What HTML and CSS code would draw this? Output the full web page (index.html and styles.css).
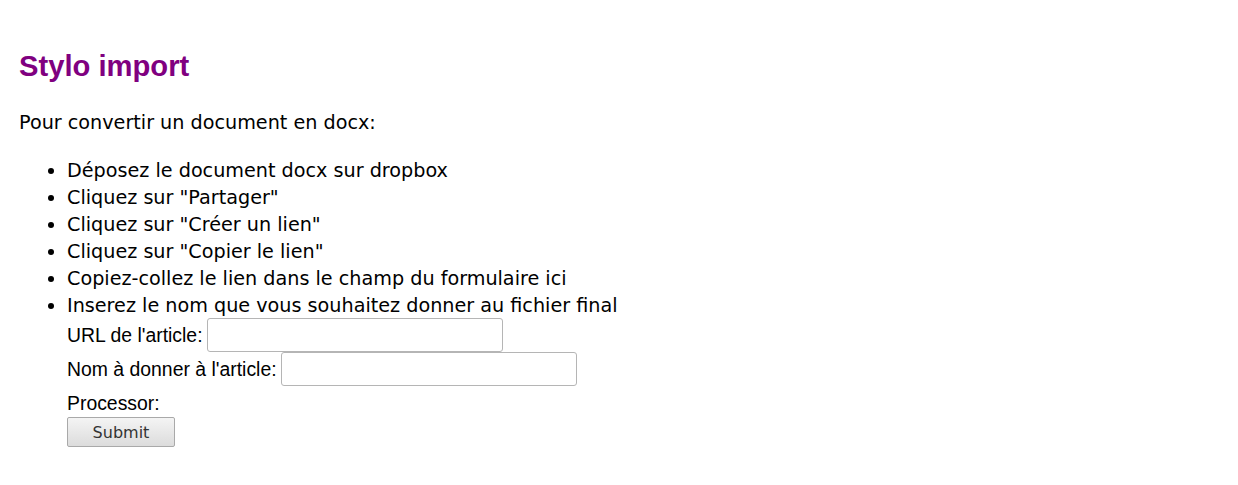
FILE: index.html
```html
<!DOCTYPE html>
<html lang="fr">
<head>
<meta charset="utf-8">
<title>Stylo import</title>
<link rel="stylesheet" href="styles.css">
</head>
<body>
<main class="page">
  <h1 class="title">Stylo import</h1>
  <p class="intro">Pour convertir un document en docx:</p>
  <ul class="steps">
    <li>Déposez le document docx sur dropbox</li>
    <li>Cliquez sur "Partager"</li>
    <li>Cliquez sur "Créer un lien"</li>
    <li>Cliquez sur "Copier le lien"</li>
    <li>Copiez-collez le lien dans le champ du formulaire ici</li>
    <li>Inserez le nom que vous souhaitez donner au fichier final</li>
  </ul>
  <form class="form">
    <div class="row">
      <label class="label" for="url">URL de l'article:</label>
      <input class="field" type="text" id="url">
    </div>
    <div class="row">
      <label class="label" for="nom">Nom à donner à l'article:</label>
      <input class="field" type="text" id="nom">
    </div>
    <div class="processor">Processor:</div>
    <button class="submit" type="button">Submit</button>
  </form>
</main>
</body>
</html>
```
FILE: styles.css
```css
html, body {
  margin: 0;
  padding: 0;
  background: #ffffff;
}

.page {
  padding: 0 19px;
  font-family: "DejaVu Sans", sans-serif;
  font-size: 19.2px;
  color: #000000;
}

.title {
  margin: 50px 0 0;
  font-family: "Liberation Sans", Arial, sans-serif;
  font-weight: bold;
  font-size: 29.2px;
  line-height: 33px;
  color: #800080;
}

.intro {
  margin: 26px 0 0;
  line-height: 27px;
}

.steps {
  margin: 21px 0 0;
  padding-left: 48px;
  line-height: 27px;
}

.form {
  margin-top: -1px;
  padding-left: 48px;
  font-family: "Liberation Sans", Arial, sans-serif;
  font-size: 19.4px;
}

.row {
  display: flex;
  align-items: center;
  height: 34px;
}

.label {
  line-height: 22px;
}

.field {
  box-sizing: border-box;
  width: 296px;
  height: 34px;
  margin: 0 0 0 4px;
  border: 1px solid #b5b5b5;
  border-radius: 3px;
  background: #ffffff;
  font-size: 16px;
  padding: 2px 6px;
}

.processor {
  margin-top: 6px;
  line-height: 22px;
}

.submit {
  display: block;
  box-sizing: border-box;
  width: 108px;
  height: 30px;
  margin: 3px 0 0;
  padding: 0;
  border: 1px solid #a9a9a9;
  border-radius: 2px;
  background: linear-gradient(#f4f4f4, #dcdcdc);
  font-family: "DejaVu Sans", sans-serif;
  font-size: 16px;
  color: #333333;
}
```
